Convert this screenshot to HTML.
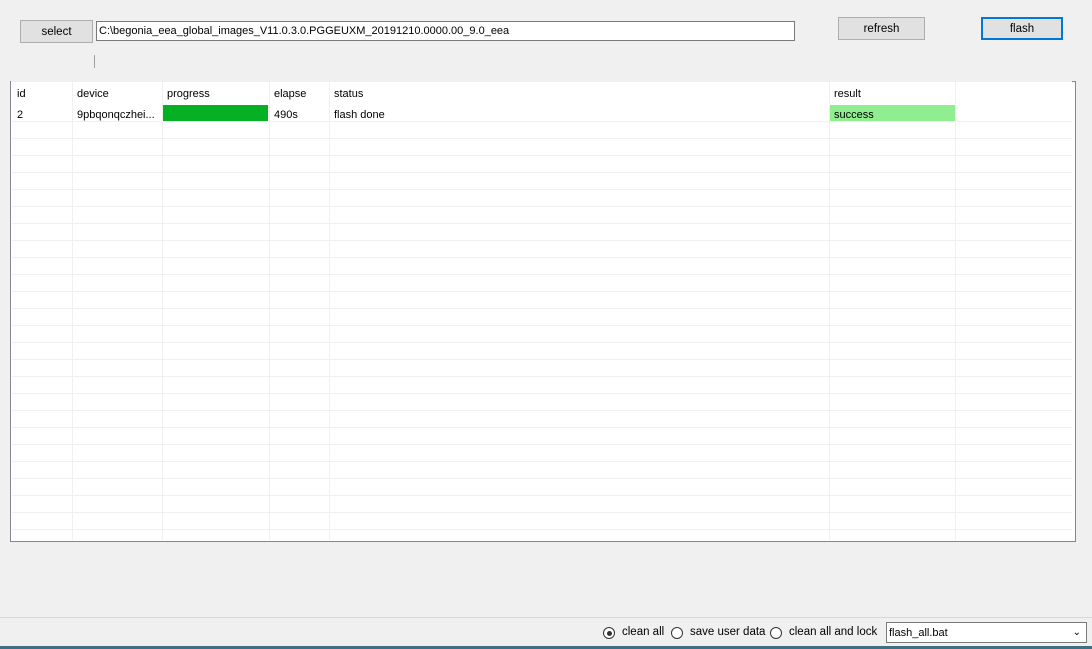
<!DOCTYPE html>
<html><head><style>
body{margin:0;width:1092px;height:649px;background:#f0f0f0;font-family:"Liberation Sans",sans-serif;font-size:11px;color:#000;position:relative;overflow:hidden}
.a{position:absolute}
.btn{background:#e1e1e1;border:1px solid #adadad;box-sizing:border-box;text-align:center;font-size:11.5px}
.v{position:absolute;top:82px;width:1px;height:458px;background:#f0f0f0}
.h{position:absolute;left:12px;width:1060px;height:1px;background:#f0f0f0}
.t{position:absolute;white-space:nowrap}
.r{display:inline-block;width:12px;height:12px;border:1px solid #333;border-radius:50%;box-sizing:border-box;vertical-align:-2px;position:relative;background:#fff}
.bt{font-size:11.5px}
</style></head><body>
<div class="a btn" style="left:20px;top:20px;width:73px;height:23px;line-height:23px">select</div>
<div class="a" style="left:96px;top:21px;width:699px;height:20px;background:#fff;border:1px solid #7a7a7a;box-sizing:border-box;line-height:19px;padding-left:2px">C:\begonia_eea_global_images_V11.0.3.0.PGGEUXM_20191210.0000.00_9.0_eea</div>
<div class="a" style="left:94px;top:55px;width:1px;height:13px;background:#a0a0a0"></div>
<div class="a btn" style="left:838px;top:17px;width:87px;height:23px;line-height:23px">refresh</div>
<div class="a btn" style="left:981px;top:17px;width:82px;height:23px;line-height:21px;border:2px solid #0078d7">flash</div>

<div class="a" style="left:10px;top:81px;width:1066px;height:461px;border-left:1px solid #828790;border-bottom:1px solid #828790;border-right:1px solid #828790;box-sizing:border-box;background:#fff"></div>
<div class="a" style="left:1072px;top:81px;width:4px;height:1px;background:#828790"></div>
<div class="a" style="left:11px;top:81px;width:1061px;height:1px;background:#f0f0f0"></div>

<div class="v" style="left:72px"></div><div class="v" style="left:162px"></div><div class="v" style="left:269px"></div><div class="v" style="left:329px"></div><div class="v" style="left:829px"></div><div class="v" style="left:955px"></div>
<div id="hl"></div>
<script>
var s='';for(var y=121;y<=529;y+=17)s+='<div class="h" style="top:'+y+'px"></div>';document.getElementById('hl').innerHTML=s;
</script>
<div class="t" style="left:17px;top:88px">id</div>
<div class="t" style="left:77px;top:88px">device</div>
<div class="t" style="left:167px;top:88px">progress</div>
<div class="t" style="left:274px;top:88px">elapse</div>
<div class="t" style="left:334px;top:88px">status</div>
<div class="t" style="left:834px;top:88px">result</div>
<div class="a" style="left:163px;top:105px;width:105px;height:16px;background:#06b025"></div>
<div class="a" style="left:830px;top:105px;width:125px;height:16px;background:#90ee90"></div>
<div class="t" style="left:17px;top:109px">2</div>
<div class="t" style="left:77px;top:109px">9pbqonqczhei...</div>
<div class="t" style="left:274px;top:109px">490s</div>
<div class="t" style="left:334px;top:109px">flash done</div>
<div class="t" style="left:834px;top:109px">success</div>

<div class="a" style="left:0;top:617px;width:1092px;height:1px;background:#d7d7d7"></div>
<div class="a" style="left:603px;top:627px"><span class="r"><span style="position:absolute;left:2.5px;top:2.5px;width:5px;height:5px;border-radius:50%;background:#333"></span></span></div>
<div class="t bt" style="left:622px;top:626px">clean all</div>
<div class="a" style="left:671px;top:627px"><span class="r"></span></div>
<div class="t bt" style="left:690px;top:626px">save user data</div>
<div class="a" style="left:770px;top:627px"><span class="r"></span></div>
<div class="t bt" style="left:789px;top:626px">clean all and lock</div>
<div class="a" style="left:886px;top:622px;width:201px;height:21px;background:#fff;border:1px solid #7a7a7a;box-sizing:border-box;line-height:20px;padding-left:2px">flash_all.bat<span style="position:absolute;right:5px;top:0;font-size:10px">&#8964;</span></div>
<div class="a" style="left:0;top:646px;width:1092px;height:3px;background:#3f6f86"></div>
</body></html>
